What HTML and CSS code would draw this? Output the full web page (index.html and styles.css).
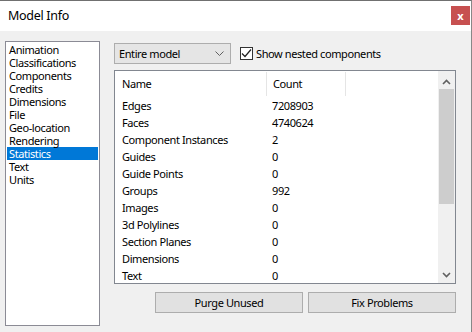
FILE: index.html
```html
<!DOCTYPE html>
<html lang="en">
<head>
    <meta charset="UTF-8">
    <title>Model Info</title>
    <link rel="stylesheet" href="styles.css">
</head>
<body>
    <div class="window">
        <div class="titleBar">
            <span class="title">Model Info</span>
            <div class="closeBtn">x</div>
        </div>
        <div class="content">
            <ul class="pageList">
                <li>Animation</li>
                <li>Classifications</li>
                <li>Components</li>
                <li>Credits</li>
                <li>Dimensions</li>
                <li>File</li>
                <li>Geo-location</li>
                <li>Rendering</li>
                <li class="selected">Statistics</li>
                <li>Text</li>
                <li>Units</li>
            </ul>
            <div class="panel">
                <div class="toolbar">
                    <div class="dropdown">
                        <span>Entire model</span>
                        <svg width="9" height="5" viewBox="0 0 9 5"><path d="M0.5 0.5 L4.5 4.5 L8.5 0.5" fill="none" stroke="#606060" stroke-width="1"/></svg>
                    </div>
                    <label class="check">
                        <span class="box">
                            <svg width="11" height="11" viewBox="0 0 11 11"><path d="M1 5.5 L4 8.5 L10 1.5" fill="none" stroke="#222" stroke-width="1.2"/></svg>
                        </span>
                        Show nested components
                    </label>
                </div>
                <div class="tableBox">
                    <div class="table">
                        <div class="headRow">
                            <div class="colName">Name</div>
                            <div class="colCount">Count</div>
                        </div>
                        <div class="row"><div class="colName">Edges</div><div class="colCount">7208903</div></div>
                        <div class="row"><div class="colName">Faces</div><div class="colCount">4740624</div></div>
                        <div class="row"><div class="colName">Component Instances</div><div class="colCount">2</div></div>
                        <div class="row"><div class="colName">Guides</div><div class="colCount">0</div></div>
                        <div class="row"><div class="colName">Guide Points</div><div class="colCount">0</div></div>
                        <div class="row"><div class="colName">Groups</div><div class="colCount">992</div></div>
                        <div class="row"><div class="colName">Images</div><div class="colCount">0</div></div>
                        <div class="row"><div class="colName">3d Polylines</div><div class="colCount">0</div></div>
                        <div class="row"><div class="colName">Section Planes</div><div class="colCount">0</div></div>
                        <div class="row"><div class="colName">Dimensions</div><div class="colCount">0</div></div>
                        <div class="row"><div class="colName">Text</div><div class="colCount">0</div></div>
                    </div>
                    <div class="scrollbar">
                        <svg class="arrow" width="9" height="6" viewBox="0 0 9 6"><path d="M1 5 L4.5 1.5 L8 5" fill="none" stroke="#606060" stroke-width="1.6"/></svg>
                        <div class="track"><div class="thumb"></div></div>
                        <svg class="arrow" width="9" height="6" viewBox="0 0 9 6"><path d="M1 1 L4.5 4.5 L8 1" fill="none" stroke="#606060" stroke-width="1.6"/></svg>
                    </div>
                </div>
                <div class="buttons">
                    <div class="btn">Purge Unused</div>
                    <div class="btn">Fix Problems</div>
                </div>
            </div>
        </div>
    </div>
</body>
</html>
```

FILE: styles.css
```css
html, body {
    margin: 0;
    padding: 0;
}
body {
    font-family: "Noto Sans", "Open Sans", sans-serif;
    font-size: 11px;
    letter-spacing: -0.4px;
    color: #000;
    background: #f0f0f0;
}
.window {
    width: 471px;
    height: 331px;
    border-top: 1px solid #707070;
    border-right: 1px solid #888;
    display: flex;
    flex-direction: column;
    background: #f0f0f0;
}
.titleBar {
    height: 30px;
    background: #fff;
    display: flex;
    align-items: center;
    justify-content: space-between;
    flex-shrink: 0;
}
.title {
    margin-left: 8px;
    font-size: 12.5px;
    letter-spacing: -0.3px;
    margin-top: -2px;
}
.closeBtn {
    width: 19px;
    height: 19px;
    margin-right: 1px;
    margin-top: -2px;
    background: #c75050;
    color: #fff;
    font-weight: bold;
    font-size: 11px;
    letter-spacing: 0;
    display: flex;
    align-items: center;
    justify-content: center;
    line-height: 1;
}
.content {
    display: flex;
    padding: 10px 0 0 5px;
    gap: 14px;
}
.pageList {
    list-style: none;
    margin: 0;
    padding: 1px;
    width: 91px;
    height: 281px;
    border: 1px solid #8b8b95;
    background: #fff;
}
.pageList li {
    height: 13px;
    line-height: 13px;
    padding-left: 2px;
}
.pageList li.selected {
    background: #0078d7;
    color: #fff;
}
.panel {
    display: flex;
    flex-direction: column;
    width: 342px;
}
.toolbar {
    display: flex;
    align-items: center;
    margin-top: 2px;
    gap: 9px;
}
.dropdown {
    width: 117px;
    height: 21px;
    border: 1px solid #adadad;
    background: #e5e5e5;
    display: flex;
    align-items: center;
    justify-content: space-between;
    padding: 0 6px 0 4px;
    box-sizing: border-box;
}
.check {
    display: flex;
    align-items: center;
    gap: 3px;
}
.check .box {
    width: 11px;
    height: 11px;
    border: 1px solid #333;
    background: #fff;
    display: flex;
}
.tableBox {
    margin-top: 6px;
    height: 212px;
    border: 1px solid #828790;
    background: #fff;
    display: flex;
    overflow: hidden;
}
.table {
    flex: 1;
}
.headRow {
    display: flex;
    height: 26px;
    align-items: center;
}
.headRow .colName {
    border-right: 1px solid #e5e5e5;
    height: 24px;
    line-height: 24px;
}
.headRow .colCount {
    border-right: 1px solid #e5e5e5;
    height: 24px;
    line-height: 24px;
    width: 72px;
}
.row {
    display: flex;
    height: 17px;
    line-height: 17px;
}
.colName {
    width: 144px;
    padding-left: 7px;
}
.colCount {
    padding-left: 6px;
}
.scrollbar {
    width: 17px;
    background: #f0f0f0;
    display: flex;
    flex-direction: column;
    align-items: center;
}
.arrow {
    margin: 8px 0 4px;
    flex-shrink: 0;
}
.scrollbar .arrow:last-child {
    margin: 4px 0 5px;
}
.track {
    flex: 1;
    width: 100%;
    display: flex;
    justify-content: center;
}
.thumb {
    width: 15px;
    height: 115px;
    background: #cdcdcd;
}
.buttons {
    display: flex;
    justify-content: flex-end;
    gap: 5px;
    margin-top: 8px;
}
.btn {
    width: 148px;
    height: 21px;
    box-sizing: border-box;
    border: 1px solid #adadad;
    background: #e1e1e1;
    display: flex;
    align-items: center;
    justify-content: center;
}
```
